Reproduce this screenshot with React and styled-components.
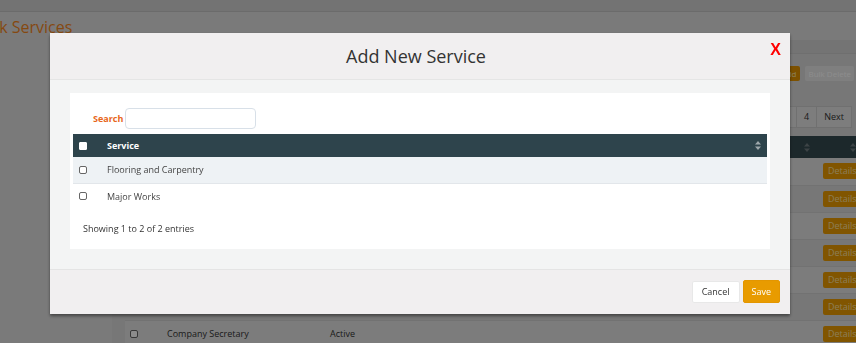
import React from 'react';
import styled, { createGlobalStyle } from 'styled-components';

/**
 * GLOBAL
 */
const GlobalStyle = createGlobalStyle`
  html, body {
    margin: 0;
    padding: 0;
  }
  body {
    width: 856px;
    height: 343px;
    overflow: hidden;
    font-family: 'Open Sans', 'Liberation Sans', sans-serif;
    background: #dedede;
  }
`;

/**
 * BACKGROUND PAGE
 */
const Page = styled.div`
  width: 856px;
  height: 343px;
  overflow: hidden;
  background: #dedede;
`;

const TopBar = styled.div`
  height: 11px;
  background: #d2d2d2;
  border-bottom: 1px solid #c4c4c4;
`;

const PageTitle = styled.h1`
  margin: 3px 0 0 -25px;
  font-size: 16px;
  line-height: 24px;
  font-weight: 400;
  color: #f2861e;
  white-space: nowrap;
`;

const Card = styled.div`
  margin: 1px 0 0 112px;
  width: 744px;
  background: #d9d9d9;
`;

const CardHead = styled.div`
  height: 13px;
  background: #d3d3d3;
  border-bottom: 1px solid #cbcbcb;
`;

const Toolbar = styled.div`
  display: flex;
  justify-content: flex-end;
  gap: 5px;
  padding: 12px 2px 0 0;
`;

const ToolButton = styled.div`
  height: 15px;
  padding: 0 ${({ variant }) => (variant === 'muted' ? 3 : 4)}px;
  font-size: 8px;
  line-height: 15px;
  border-radius: 2px;
  background: ${({ variant }) => (variant === 'muted' ? '#e8e8e8' : '#e39400')};
  color: ${({ variant }) => (variant === 'muted' ? '#ffffff' : '#ffe9b0')};
`;

const Pager = styled.div`
  display: flex;
  justify-content: flex-end;
  padding: 25px 4px 0 0;
`;

const PageLink = styled.div`
  height: 20px;
  padding: 0 7px;
  border: 1px solid #cdcdcd;
  margin-left: -1px;
  background: #e4e4e4;
  font-size: 9px;
  line-height: 20px;
  color: #333;
`;

const BgTable = styled.table`
  margin: 8px 0 0 13px;
  width: 735px;
  border-collapse: collapse;
  font-size: 9px;
  table-layout: fixed;
`;

const BgHeadCell = styled.th`
  box-sizing: border-box;
  height: 22px;
  padding: 0 ${({ pr }) => pr || 0}px 0 ${({ pl }) => pl || 0}px;
  background: #34494f;
  color: #fff;
  font-weight: 700;
  text-align: left;
  width: ${({ w }) => w}px;
`;

const BgRow = styled.tr`
  height: 27px;
  background: ${({ odd }) => (odd ? '#e2e2e2' : '#d9d9d9')};
  border-bottom: 1px solid #d0d0d0;
`;

const BgCell = styled.td`
  padding: 0 0 0 ${({ pl }) => pl || 0}px;
  color: #333;
  white-space: nowrap;
  overflow: hidden;
`;

const HeadInner = styled.div`
  display: flex;
  align-items: center;
  justify-content: space-between;
`;

const DetailsButton = styled.span`
  display: inline-block;
  height: 16px;
  padding: 0 5px;
  line-height: 16px;
  border-radius: 2px;
  background: #eb9c00;
  color: #ffe2a0;
`;

/**
 * MODAL
 */
const Overlay = styled.div`
  position: fixed;
  inset: 0;
  background: rgba(0, 0, 0, 0.45);
`;

const Modal = styled.div`
  margin: 33px 0 0 50px;
  width: 740px;
  box-sizing: border-box;
  background: #f3f4f4;
  box-shadow: 0 2px 3px rgba(0, 0, 0, 0.45);
`;

const ModalHeader = styled.div`
  position: relative;
  height: 46px;
  padding-right: 8px;
  display: flex;
  align-items: center;
  justify-content: center;
  background: #f1eff0;
  border-bottom: 1px solid #e5e5e5;
`;

const ModalTitle = styled.h2`
  margin: 0;
  font-size: 18px;
  font-weight: 400;
  color: #333;
`;

const CloseX = styled.span`
  position: absolute;
  top: 8px;
  right: 9px;
  font-family: 'Liberation Sans', Arial, sans-serif;
  font-weight: 700;
  font-size: 16px;
  color: #ff0000;
  cursor: pointer;
`;

const ModalBody = styled.div`
  padding: 13px 20px 20px;
`;

const Panel = styled.div`
  background: #ffffff;
  padding: 15px 3px 14px;
`;

const SearchRow = styled.div`
  display: flex;
  align-items: center;
  gap: 2px;
  padding-left: 20px;
  margin-bottom: 5px;
`;

const SearchLabel = styled.label`
  font-size: 9px;
  font-weight: 700;
  color: #e8661c;
`;

const SearchInput = styled.input`
  width: 131px;
  height: 21px;
  box-sizing: border-box;
  border: 1px solid #d8e0e8;
  border-radius: 4px;
  outline: none;
`;

const Table = styled.table`
  width: 100%;
  border-collapse: collapse;
  font-size: 9px;
  table-layout: fixed;
`;

const HeadCell = styled.th`
  box-sizing: border-box;
  height: 23px;
  padding: 0 ${({ pr }) => pr || 0}px 0 ${({ pl }) => pl || 0}px;
  background: #2e444c;
  color: #fff;
  font-weight: 700;
  text-align: left;
  width: ${({ w }) => (w ? `${w}px` : 'auto')};
`;

const Row = styled.tr`
  height: 26px;
  background: ${({ striped }) => (striped ? '#eef2f5' : '#ffffff')};
  border-bottom: 1px solid ${({ striped }) => (striped ? '#e2e6ea' : '#ffffff')};
`;

const Cell = styled.td`
  padding: 0 0 0 ${({ pl }) => pl || 0}px;
  color: #444;
`;

const Check = styled.span`
  display: block;
  width: 8px;
  height: 8px;
  box-sizing: border-box;
  border-radius: ${({ filled }) => (filled ? '1px' : '2px')};
  border: 1px solid ${({ filled }) => (filled ? '#ffffff' : '#666')};
  background: #ffffff;
`;

const Showing = styled.div`
  margin: 13px 0 0 10px;
  font-size: 9px;
  line-height: 12px;
  color: #333;
`;

const ModalFooter = styled.div`
  height: 44px;
  display: flex;
  align-items: center;
  justify-content: flex-end;
  gap: 3px;
  padding-right: 10px;
  background: #f1eff0;
  border-top: 1px solid #e4e4e4;
`;

const Button = styled.button`
  height: ${({ primary }) => (primary ? 23 : 22)}px;
  padding: 0 ${({ primary }) => (primary ? 8 : 9)}px;
  font-family: 'Open Sans', sans-serif;
  font-size: 9px;
  border-radius: 2px;
  border: 1px solid ${({ primary }) => (primary ? '#e39600' : '#e8e8e8')};
  background: ${({ primary }) => (primary ? '#e89b00' : '#ffffff')};
  color: ${({ primary }) => (primary ? '#ffffff' : '#333')};
`;

const SortIcon = ({ color = '#9ea8ac' }) => (
  <svg width="6" height="9" viewBox="0 0 6 9">
    <path d="M3 0 L6 3.6 H0 Z M3 9 L6 5.4 H0 Z" fill={color} />
  </svg>
);

const bgRows = [
  'Accounting', 'Audit', 'Bookkeeping', 'Business Advisory',
  'Cleaning', 'Compliance', 'Company Secretary',
];

const services = ['Flooring and Carpentry', 'Major Works'];

/**
 * MAIN COMPONENT
 */
const App = () => (
  <>
    <GlobalStyle />
    <Page>
      <TopBar />
      <PageTitle>Bulk Services</PageTitle>
      <Card>
        <CardHead />
        <Toolbar>
          <ToolButton>Add</ToolButton>
          <ToolButton variant="muted">Bulk Delete</ToolButton>
        </Toolbar>
        <Pager>
          {['Previous', '1', '2', '3', '4', 'Next'].map((p) => <PageLink key={p}>{p}</PageLink>)}
        </Pager>
        <BgTable>
          <thead>
            <tr>
              <BgHeadCell w={30} pl={5}><Check filled /></BgHeadCell>
              <BgHeadCell w={165} pl={12}>Service</BgHeadCell>
              <BgHeadCell w={280} pl={10}>Status</BgHeadCell>
              <BgHeadCell w={215} pr={5}><HeadInner><span /><SortIcon color="#6d7a7e" /></HeadInner></BgHeadCell>
              <BgHeadCell w={45} pl={8} pr={4}><HeadInner><span /><SortIcon color="#6d7a7e" /></HeadInner></BgHeadCell>
            </tr>
          </thead>
          <tbody>
            {bgRows.map((name, idx) => (
              <BgRow key={name} odd={idx % 2 === 0}>
                <BgCell pl={5}><Check /></BgCell>
                <BgCell pl={12}>{name}</BgCell>
                <BgCell pl={10}>Active</BgCell>
                <BgCell />
                <BgCell pl={8}><DetailsButton>Details</DetailsButton></BgCell>
              </BgRow>
            ))}
          </tbody>
        </BgTable>
      </Card>
    </Page>

    <Overlay>
      <Modal>
        <ModalHeader>
          <ModalTitle>Add New Service</ModalTitle>
          <CloseX>X</CloseX>
        </ModalHeader>
        <ModalBody>
          <Panel>
            <SearchRow>
              <SearchLabel>Search</SearchLabel>
              <SearchInput type="text" />
            </SearchRow>
            <Table>
              <thead>
                <tr>
                  <HeadCell w={24} pl={6}><Check filled /></HeadCell>
                  <HeadCell pl={10} pr={6}>
                    <HeadInner>Service<SortIcon /></HeadInner>
                  </HeadCell>
                </tr>
              </thead>
              <tbody>
                {services.map((s, idx) => (
                  <Row key={s} striped={idx % 2 === 0}>
                    <Cell pl={6}><Check /></Cell>
                    <Cell pl={10}>{s}</Cell>
                  </Row>
                ))}
              </tbody>
            </Table>
            <Showing>Showing 1 to 2 of 2 entries</Showing>
          </Panel>
        </ModalBody>
        <ModalFooter>
          <Button>Cancel</Button>
          <Button primary>Save</Button>
        </ModalFooter>
      </Modal>
    </Overlay>
  </>
);

export default App;
